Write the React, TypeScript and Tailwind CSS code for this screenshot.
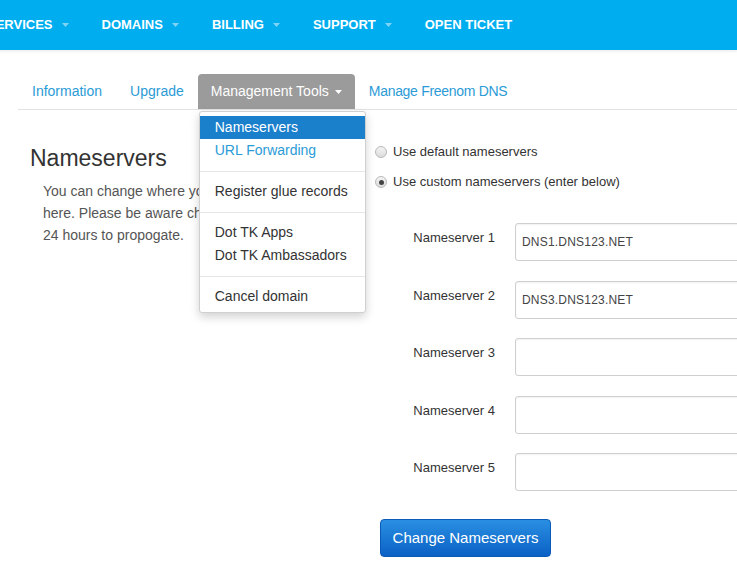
import { ReactNode } from 'react'

const NAV = ['SERVICES', 'DOMAINS', 'BILLING', 'SUPPORT']
const TABS = ['Information', 'Upgrade']

function Caret({ className = '' }: { className?: string }) {
  return (
    <svg width="7" height="4" viewBox="0 0 7 4" className={className}>
      <path d="M0 0h7L3.5 4z" fill="currentColor" />
    </svg>
  )
}

function Radio({ checked }: { checked?: boolean }) {
  return (
    <span className="w-[12px] h-[12px] rounded-full border border-[#b9b9b9] bg-gradient-to-b from-[#f4f4f4] to-[#dcdcdc] flex items-center justify-center shrink-0">
      {checked && <span className="w-[5px] h-[5px] rounded-full bg-[#444]" />}
    </span>
  )
}

function MenuItem({ children, active, link }: { children: ReactNode; active?: boolean; link?: boolean }) {
  return (
    <li
      className={`h-[23px] leading-[23px] pl-[15px] text-[14px] ${
        active ? 'bg-[#1b80cc] text-white' : link ? 'text-[#2b9bd6]' : 'text-[#333]'
      }`}
    >
      {children}
    </li>
  )
}

const Divider = () => <li className="h-px bg-[#e5e5e5] my-[8.5px]" />

const SERVERS = ['DNS1.DNS123.NET', 'DNS3.DNS123.NET', '', '', '']

export default function App() {
  return (
    <div className="w-[737px] h-[561px] overflow-hidden bg-white relative font-['Liberation_Sans',Arial,sans-serif]">
      {/* top bar */}
      <header className="h-[50px] bg-[#00aeef] flex items-center ml-[-13px] gap-[33px] shadow-[0_2px_2px_rgba(0,0,0,0.06)]">
        {NAV.map(n => (
          <span key={n} className="flex items-center gap-[9px] text-white text-[13px] font-bold">
            {n}
            <Caret className="text-[#7fd3f4]" />
          </span>
        ))}
        <span className="text-white text-[13px] font-bold">OPEN TICKET</span>
      </header>

      {/* tabs */}
      <ul className="ml-[18px] mt-[24px] flex border-b border-[#e2e2e2] h-[36px]">
        {TABS.map(t => (
          <li key={t} className="px-[14px] leading-[35px] text-[14px] text-[#2b9bd6]">{t}</li>
        ))}
        <li className="relative">
          <div className="h-[35px] px-[13px] bg-[#9b9b9b] rounded-t-[4px] flex items-center gap-[6px] text-white text-[14px]">
            Management Tools
            <Caret />
          </div>
          <ul className="absolute left-[1px] top-[37px] w-[167px] bg-white border border-[#d0d0d0] rounded-[3px] shadow-[0_4px_10px_rgba(0,0,0,0.18)] pt-[4px] pb-[4px] z-10">
            <MenuItem active>Nameservers</MenuItem>
            <MenuItem link>URL Forwarding</MenuItem>
            <Divider />
            <MenuItem>Register glue records</MenuItem>
            <Divider />
            <MenuItem>Dot TK Apps</MenuItem>
            <MenuItem>Dot TK Ambassadors</MenuItem>
            <Divider />
            <MenuItem>Cancel domain</MenuItem>
          </ul>
        </li>
        <li className="px-[14px] leading-[35px] text-[14px] text-[#2b9bd6] tracking-[-0.3px]">Manage Freenom DNS</li>
      </ul>

      {/* content */}
      <div className="flex">
        <div className="w-[375px] shrink-0 pl-[30px] pt-[33px]">
          <h1 className="text-[23px] leading-[30px] text-[#333]">Nameservers</h1>
          <p className="pl-[13px] mt-[7px] text-[14px] leading-[22px] text-[#555]">
            You can change where your domain points to
            <br />
            here. Please be aware changes can take up to
            <br />
            24 hours to propogate.
          </p>
        </div>

        <div className="pt-[32px] flex-1">
          <label className="flex items-center gap-[6px] h-[20px] text-[13px] text-[#333]">
            <Radio />
            Use default nameservers
          </label>
          <label className="flex items-center gap-[6px] h-[20px] mt-[10px] text-[13px] text-[#333]">
            <Radio checked />
            Use custom nameservers (enter below)
          </label>

          <div className="mt-[31px] flex flex-col gap-[19.5px]">
            {SERVERS.map((v, i) => (
              <div key={i} className="flex items-start gap-[20px]">
                <span className="w-[120px] text-right pt-[5px] text-[13px] leading-[20px] text-[#333]">
                  Nameserver {i + 1}
                </span>
                <div className="w-[260px] h-[38px] shrink-0 border border-[#cfcfcf] rounded-[3px] shadow-[inset_0_1px_2px_rgba(0,0,0,0.06)] pl-[6px] flex items-center text-[12px] text-[#444] tracking-[0.2px]">
                  {v}
                </div>
              </div>
            ))}
          </div>

          <button className="mt-[28px] ml-[5px] w-[171px] h-[38px] rounded-[4px] bg-gradient-to-b from-[#2a8fe2] to-[#0b61c5] border border-[#0a5bb8] text-white text-[15px]">
            Change Nameservers
          </button>
        </div>
      </div>
    </div>
  )
}
